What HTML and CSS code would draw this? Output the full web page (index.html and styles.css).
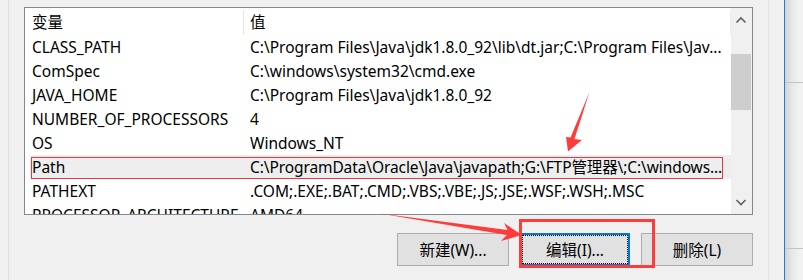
FILE: index.html
```html
<!DOCTYPE html>
<html lang="zh-CN">
<head>
<meta charset="utf-8">
<title>环境变量</title>
<link rel="stylesheet" href="styles.css">
</head>
<body>
<div class="screen">
  <div class="main">
    <div class="content">
      <div class="listbox">
        <div class="table">
          <div class="hdr">
            <div class="hc1">变量</div>
            <div class="hc2">值</div>
          </div>
          <div class="rows">
            <div class="row"><span class="c1">CLASS_PATH</span><span class="c2">C:\Program Files\Java\jdk1.8.0_92\lib\dt.jar;C:\Program Files\Jav...</span></div>
            <div class="row"><span class="c1">ComSpec</span><span class="c2">C:\windows\system32\cmd.exe</span></div>
            <div class="row"><span class="c1">JAVA_HOME</span><span class="c2">C:\Program Files\Java\jdk1.8.0_92</span></div>
            <div class="row"><span class="c1">NUMBER_OF_PROCESSORS</span><span class="c2">4</span></div>
            <div class="row"><span class="c1">OS</span><span class="c2">Windows_NT</span></div>
            <div class="row sel"><span class="c1">Path</span><span class="c2 tight">C:\ProgramData\Oracle\Java\javapath;G:\FTP管理器\;C:\windows...</span></div>
            <div class="row"><span class="c1">PATHEXT</span><span class="c2">.COM;.EXE;.BAT;.CMD;.VBS;.VBE;.JS;.JSE;.WSF;.WSH;.MSC</span></div>
            <div class="row"><span class="c1">PROCESSOR_ARCHITECTURE</span><span class="c2">AMD64</span></div>
          </div>
        </div>
        <div class="vscroll">
          <div class="sbtn">
            <svg width="21" height="21" viewBox="0 0 21 21"><polyline points="5.5,14.5 10,10 14.5,14.5" fill="none" stroke="#606060" stroke-width="1.6"/></svg>
          </div>
          <div class="track"><div class="thumb"></div></div>
          <div class="sbtn">
            <svg width="21" height="21" viewBox="0 0 21 21"><polyline points="5.5,7 10,11.5 14.5,7" fill="none" stroke="#606060" stroke-width="1.6"/></svg>
          </div>
        </div>
      </div>
      <div class="buttons">
        <button class="btn b-new">新建(W)...</button>
        <button class="btn b-edit">编辑(I)...</button>
        <button class="btn b-del">删除(L)</button>
      </div>
    </div>
  </div>
  <div class="edge">
    <div class="seg s1"></div>
    <div class="seg s2"></div>
    <div class="seg s3"></div>
  </div>
  <svg class="annot" width="803" height="280" viewBox="0 0 803 280">
    <rect x="31.5" y="157.5" width="691" height="21" fill="none" stroke="#e8383b" stroke-width="1"/>
    <rect x="520.5" y="220.5" width="133" height="46" fill="none" stroke="#ff3c3c" stroke-width="3"/>
    <polygon points="589.5,92 574.5,139 582,140 568,151.5 566,137 570.5,137.5" fill="#ff3c3c"/>
    <polygon points="380,213.5 507.6,230.1 504,223 522,235 501,241 506.8,235.1" fill="#ff3c3c"/>
  </svg>
</div>
</body>
</html>
```

FILE: styles.css
```css
html, body {
  margin: 0;
  padding: 0;
  background: #f0f0f0;
}

.screen {
  position: relative;
  display: flex;
  width: 803px;
  height: 280px;
  overflow: hidden;
  background: #f0f0f0;
  font-family: "Noto Sans", "Noto Sans CJK SC", sans-serif;
  font-size: 15.5px;
  color: #000;
}

.main {
  width: 784px;
  padding: 0 15px 0 8px;
  box-sizing: border-box;
  display: flex;
  flex: none;
}

.content {
  width: 761px;
  border-left: 1px solid #dcdcdc;
  border-right: 1px solid #e4e4e4;
  box-sizing: border-box;
  padding: 7px 15px 0 15px;
}

.listbox {
  height: 208px;
  border: 1px solid #828790;
  background: #fff;
  box-sizing: border-box;
  display: flex;
}

.table {
  flex: 1;
  min-width: 0;
  display: flex;
  flex-direction: column;
  overflow: hidden;
}

.hdr {
  display: flex;
  height: 27px;
  flex: none;
}

.hc1 {
  width: 211px;
  padding-left: 7px;
  border-right: 1px solid #e5e5e5;
  margin-top: 2px;
  line-height: 24px;
}

.hc2 {
  flex: 1;
  padding-left: 6px;
  margin-top: 2px;
  line-height: 24px;
  border-right: 1px solid #ececec;
}

.rows {
  flex: 1;
  overflow: hidden;
}

.row {
  display: flex;
  height: 24px;
  line-height: 24px;
  margin-left: 5px;
  white-space: nowrap;
}

.row.sel {
  background: #eeeeee;
}

.c1 {
  width: 218px;
  padding-left: 2px;
  flex: none;
  overflow: visible;
}

.c2 {
  flex: 1;
  min-width: 0;
  overflow: hidden;
}

.c2.tight {
  letter-spacing: -0.1px;
}

.vscroll {
  width: 21px;
  flex: none;
  background: #f0f0f0;
  display: flex;
  flex-direction: column;
}

.sbtn {
  height: 21px;
  flex: none;
}

.sbtn svg {
  display: block;
}

.track {
  flex: 1;
}

.thumb {
  margin-top: 25px;
  width: 20px;
  height: 56px;
  background: #cdcdcd;
}

.buttons {
  display: flex;
  justify-content: flex-end;
  gap: 11px;
  margin-top: 18px;
}

.btn {
  height: 33px;
  width: 112px;
  border: 1px solid #adadad;
  background: #e1e1e1;
  font-family: "Noto Sans", "Noto Sans CJK SC", sans-serif;
  font-size: 15.5px;
  color: #000;
  padding: 0;
  margin: 0;
  box-sizing: border-box;
}

.b-edit {
  width: 110px;
  border: 1px solid #0078d7;
  box-shadow: inset 0 0 0 1px #0078d7;
  outline: 1px dotted #000;
  outline-offset: -3px;
}

.edge {
  flex: 1;
  border-left: 1px solid #1a7fd6;
  background: linear-gradient(to right, #d2d2d2 0, #e6e6e6 6px, #f2f2f2 14px);
  display: flex;
  flex-direction: column;
}

.seg {
  flex: none;
}

.s1 {
  height: 82px;
}

.s2 {
  height: 165px;
  border-top: 1px solid #c4c4c4;
}

.s3 {
  flex: 1;
  border-top: 1px solid #c4c4c4;
}

.annot {
  position: absolute;
  left: 0;
  top: 0;
  pointer-events: none;
}
```
